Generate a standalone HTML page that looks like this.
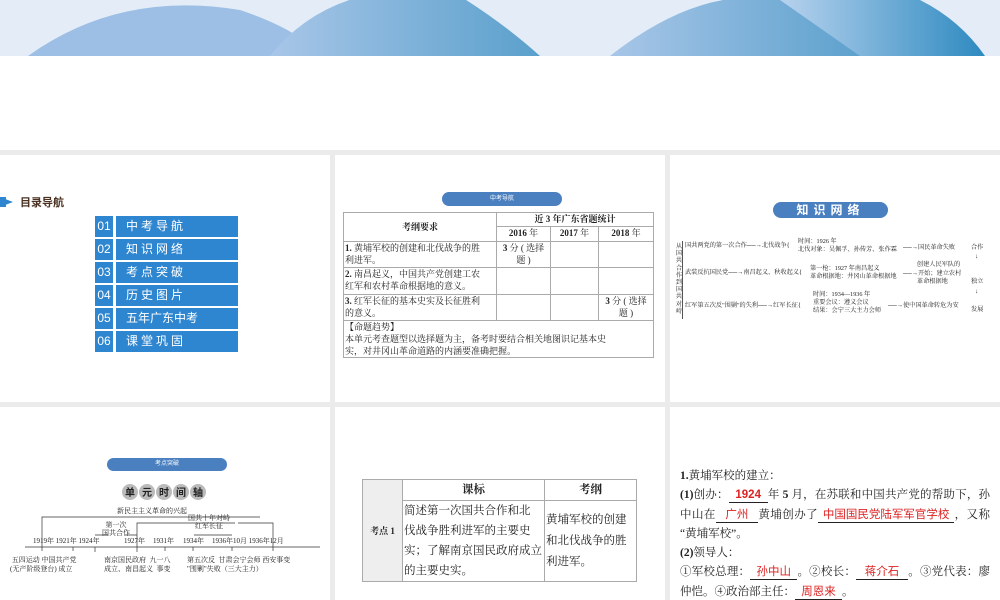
<!DOCTYPE html>
<html><head><meta charset="utf-8"><style>
*{margin:0;padding:0;box-sizing:border-box}
body{width:1000px;height:600px;overflow:hidden;background:#ebebeb;position:relative;font-family:"Liberation Serif","Noto Serif CJK SC",serif;color:#222}
.a{position:absolute}
.s{position:absolute;background:#fff;overflow:hidden}
.pill{position:absolute;background:#4a7fc0;border-radius:10px;color:#fff;text-align:center;font-family:"Liberation Sans","Noto Sans CJK SC",sans-serif}
table{border-collapse:collapse;position:absolute;table-layout:fixed}
td{border:1px solid #aaa;vertical-align:top;padding:0 1px;white-space:nowrap;overflow:hidden}
.m{position:absolute;background:#2f86d0;color:#fff;font-family:"Liberation Sans","Noto Sans CJK SC",sans-serif;font-size:12px;line-height:21px}
.t6{font-size:11.5px;line-height:19.3px;font-family:"Liberation Serif","Noto Serif CJK SC",serif}
.t6 div{white-space:nowrap}
.j{text-align:justify;text-align-last:justify}
.r{color:#d22;border-bottom:1px solid #222;display:inline-block;text-align:center;line-height:14px;font-family:"Liberation Sans","Noto Sans CJK SC",sans-serif;white-space:nowrap;text-align-last:center}
.d{font-size:6.2px;line-height:8px;white-space:nowrap}
.e{font-size:7px;line-height:9px;white-space:nowrap;position:absolute}
</style></head><body>
<div class="s" style="left:0;top:0;width:1000px;height:150px">
<svg class="a" style="left:0;top:0" width="1000" height="56">
<defs><linearGradient id="g1" x1="0" x2="1"><stop offset="0" stop-color="#a8c6e8"/><stop offset="1" stop-color="#5aa0cc"/></linearGradient>
<linearGradient id="g2" x1="0" x2="1"><stop offset="0" stop-color="#b8d2ee"/><stop offset="1" stop-color="#2d8ac0"/></linearGradient></defs>
<rect width="1000" height="56" fill="#e4edf7"/>
<path d="M28 56 Q120 -10 240 10 Q300 30 320 56Z" fill="#9dbfe5"/>
<path d="M270 56 Q330 -20 450 -10 Q500 20 540 56Z" fill="url(#g1)"/>
<path d="M610 56 Q700 -15 780 0 Q830 20 870 56Z" fill="url(#g1)"/>
<path d="M780 0 L920 0 Q960 20 985 56 L860 56Z" fill="url(#g2)"/>
</svg></div>

<div class="s" style="left:0;top:155px;width:330px;height:247px">
<div class="a" style="left:0;top:42px;width:0;height:0;border-top:5px solid transparent;border-bottom:5px solid transparent;border-left:13px solid #2f86d0"></div>
<div class="a" style="left:0;top:42px;width:6px;height:10px;background:#2f86d0"></div>
<div class="a" style="left:20px;top:39px;font:bold 11px 'Liberation Sans','Noto Sans CJK SC',sans-serif;color:#4a3020">目录导航</div>
<div class="m" style="left:95px;top:61px;width:18px;text-align:center">01</div><div class="m" style="left:116px;top:61px;width:122px;padding-left:10px;letter-spacing:3px">中考导航</div>
<div class="m" style="left:95px;top:84px;width:18px;text-align:center">02</div><div class="m" style="left:116px;top:84px;width:122px;padding-left:10px;letter-spacing:3px">知识网络</div>
<div class="m" style="left:95px;top:107px;width:18px;text-align:center">03</div><div class="m" style="left:116px;top:107px;width:122px;padding-left:10px;letter-spacing:3px">考点突破</div>
<div class="m" style="left:95px;top:130px;width:18px;text-align:center">04</div><div class="m" style="left:116px;top:130px;width:122px;padding-left:10px;letter-spacing:3px">历史图片</div>
<div class="m" style="left:95px;top:153px;width:18px;text-align:center">05</div><div class="m" style="left:116px;top:153px;width:122px;padding-left:10px">五年广东中考</div>
<div class="m" style="left:95px;top:176px;width:18px;text-align:center">06</div><div class="m" style="left:116px;top:176px;width:122px;padding-left:10px;letter-spacing:3px">课堂巩固</div>
</div>

<div class="s" style="left:335px;top:155px;width:330px;height:247px">
<div class="pill" style="left:107px;top:37px;width:120px;height:14px;font-size:6px;line-height:14px">中考导航</div>
<table style="left:8px;top:57px;width:310px;font-size:9px;line-height:12px">
<colgroup><col style="width:153px"><col style="width:54px"><col style="width:48px"><col style="width:55px"></colgroup>
<tr style="height:14px"><td rowspan="2" style="text-align:center;vertical-align:middle;font-weight:bold">考纲要求</td><td colspan="3" style="text-align:center;font-weight:bold">近 3 年广东省题统计</td></tr>
<tr style="height:15px"><td style="text-align:center"><b>2016</b> 年</td><td style="text-align:center"><b>2017</b> 年</td><td style="text-align:center"><b>2018</b> 年</td></tr>
<tr style="height:26px"><td><b>1.</b> 黄埔军校的创建和北伐战争的胜<br>利进军。</td><td style="text-align:center"><b>3</b> 分 ( 选择<br>题 )</td><td></td><td></td></tr>
<tr style="height:27px"><td><b>2.</b> 南昌起义，中国共产党创建工农<br>红军和农村革命根据地的意义。</td><td></td><td></td><td></td></tr>
<tr style="height:26px"><td><b>3.</b> 红军长征的基本史实及长征胜利<br>的意义。</td><td></td><td></td><td style="text-align:center"><b>3</b> 分 ( 选择<br>题 )</td></tr>
<tr style="height:37px"><td colspan="4">【命题趋势】<br>本单元考查题型以选择题为主，备考时要结合相关地图识记基本史<br>实，对井冈山革命道路的内涵要准确把握。</td></tr>
</table></div>

<div class="s" style="left:670px;top:155px;width:330px;height:247px">
<div class="pill" style="left:103px;top:47px;width:115px;height:16px;font-size:12px;line-height:16px;font-weight:bold;letter-spacing:5px">知识网络</div>
<div class="a d" style="left:5px;top:88px;width:8px;white-space:normal;line-height:7.2px;text-align:center">从国共合作到国共对峙</div>
<div class="a" style="left:12px;top:86px;width:1px;height:78px;background:#555"></div>
<div class="a d" style="left:15px;top:87px">国共两党的第一次合作──→北伐战争{</div>
<div class="a d" style="left:128px;top:83px">时间：1926 年<br>北伐对象：吴佩孚、孙传芳、张作霖</div>
<div class="a d" style="left:233px;top:89px">──→国民革命失败</div>
<div class="a d" style="left:301px;top:89px">合作</div>
<div class="a d" style="left:15px;top:114px">武装反抗国民党──→南昌起义、秋收起义{</div>
<div class="a d" style="left:140px;top:110px">第一枪：1927 年南昌起义<br>革命根据地：井冈山革命根据地</div>
<div class="a d" style="left:233px;top:106px;line-height:8.5px">&nbsp;&nbsp;&nbsp;&nbsp;&nbsp;&nbsp;&nbsp;&nbsp;&nbsp;创建人民军队的<br>──→开始；建立农村<br>&nbsp;&nbsp;&nbsp;&nbsp;&nbsp;&nbsp;&nbsp;&nbsp;&nbsp;革命根据地</div>
<div class="a d" style="left:305px;top:98px">↓</div>
<div class="a d" style="left:301px;top:123px">独立</div>
<div class="a d" style="left:305px;top:133px">↓</div>
<div class="a d" style="left:15px;top:147px">红军第五次反"围剿"的失利──→红军长征{</div>
<div class="a d" style="left:143px;top:136px">时间：1934—1936 年<br>重要会议：遵义会议<br>结果：会宁三大主力会师</div>
<div class="a d" style="left:218px;top:147px">──→使中国革命转危为安</div>
<div class="a d" style="left:301px;top:151px">发展</div>
</div>

<div class="s" style="left:0;top:407px;width:330px;height:193px">
<div class="pill" style="left:107px;top:51px;width:120px;height:13px;font-size:6px;line-height:13px">考点突破</div>
<div class="a" style="left:122px;top:77px;font:bold 10px 'Noto Sans CJK SC',sans-serif;white-space:nowrap">
<span style="display:inline-block;width:16px;height:16px;border-radius:50%;background:#bbb;text-align:center;line-height:16px;margin-right:1px">单</span><span style="display:inline-block;width:16px;height:16px;border-radius:50%;background:#bbb;text-align:center;line-height:16px;margin-right:1px">元</span><span style="display:inline-block;width:16px;height:16px;border-radius:50%;background:#bbb;text-align:center;line-height:16px;margin-right:1px">时</span><span style="display:inline-block;width:16px;height:16px;border-radius:50%;background:#bbb;text-align:center;line-height:16px;margin-right:1px">间</span><span style="display:inline-block;width:16px;height:16px;border-radius:50%;background:#bbb;text-align:center;line-height:16px">轴</span></div>
<svg class="a" style="left:0;top:0" width="330" height="193" stroke="#333" stroke-width="0.7" fill="none">
<path d="M42 140 V110 H260"/><path d="M137 140 V116 H235"/><path d="M273 140 V116 H238"/><path d="M95 128 H108 M125 128 H137"/><path d="M194 128 H232"/>
<path d="M25 140 H320"/>
<path d="M42 140v4M73 140v4M95 140v5M137 140v5M165 140v4M193 140v4M232 140v4M273 140v4"/>
</svg>
<div class="e" style="left:117px;top:100px">新民主主义革命的兴起</div>
<div class="e" style="left:102px;top:114px;text-align:center;line-height:8px">第一次<br>国共合作</div>
<div class="e" style="left:188px;top:107px;text-align:center;line-height:8px">国共十年对峙<br>红军长征</div>
<div class="e" style="left:33px;top:130px">1919年 1921年 1924年</div>
<div class="e" style="left:124px;top:130px">1927年</div>
<div class="e" style="left:153px;top:130px">1931年</div>
<div class="e" style="left:183px;top:130px">1934年</div>
<div class="e" style="left:212px;top:130px">1936年10月 1936年12月</div>
<div class="e" style="left:10px;top:149px">&nbsp;五四运动 中国共产党<br>(无产阶级登台) 成立</div>
<div class="e" style="left:104px;top:149px">南京国民政府 &nbsp;九一八<br>成立、南昌起义 &nbsp;事变</div>
<div class="e" style="left:187px;top:149px">第五次反 &nbsp;甘肃会宁会师 西安事变<br>"围剿"失败（三大主力）</div>
</div>

<div class="s" style="left:335px;top:407px;width:330px;height:193px">
<table style="left:27px;top:72px;width:274px;font-size:11.5px;line-height:20px">
<colgroup><col style="width:40px"><col style="width:142px"><col style="width:92px"></colgroup>
<tr style="height:20px"><td rowspan="2" style="background:#eee;vertical-align:middle;text-align:center;font-weight:bold;font-size:9px">考点 1</td><td style="text-align:center;font-weight:bold">课标</td><td style="text-align:center;font-weight:bold">考纲</td></tr>
<tr><td>简述第一次国共合作和北<br>伐战争胜利进军的主要史<br>实；了解南京国民政府成立<br>的主要史实。</td><td style="vertical-align:middle;line-height:21px">黄埔军校的创建<br>和北伐战争的胜<br>利进军。</td></tr>
</table></div>

<div class="s" style="left:670px;top:407px;width:330px;height:193px">
<div class="a t6" style="left:10px;top:60px;width:310px">
<div><b>1.</b>黄埔军校的建立：</div>
<div class="j"><b>(1)</b>创办：<span class="r" style="width:39px"><b>1924</b></span>年 <b>5</b> 月，在苏联和中国共产党的帮助下，孙</div>
<div class="j">中山在<span class="r" style="width:42px">广州</span>黄埔创办了<span class="r" style="width:136px">中国国民党陆军军官学校</span>，又称</div>
<div>“黄埔军校”。</div>
<div><b>(2)</b>领导人：</div>
<div class="j">①军校总理：<span class="r" style="width:47px">孙中山</span>。②校长：<span class="r" style="width:52px">蒋介石</span>。③党代表：廖</div>
<div>仲恺。④政治部主任：<span class="r" style="width:47px">周恩来</span>。</div>
</div></div>
</body></html>
